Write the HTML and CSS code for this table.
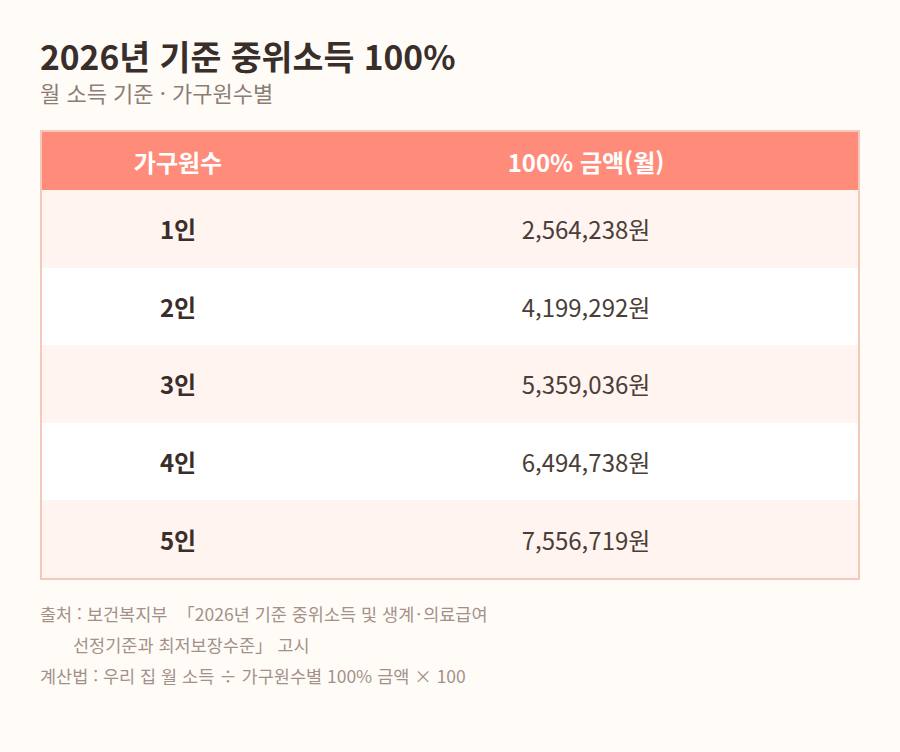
FILE: index.html
```html
<!DOCTYPE html>
<html lang="ko">
<head>
<meta charset="utf-8">
<title>2026년 기준 중위소득 100%</title>
<link rel="stylesheet" href="styles.css">
</head>
<body>
<main class="page">
  <header class="heading">
    <h1 class="title">2026년 기준 중위소득 100%</h1>
    <p class="subtitle">월 소득 기준 · 가구원수별</p>
  </header>
  <div class="table">
    <div class="row head">
      <div class="cell">가구원수</div>
      <div class="cell">100% 금액(월)</div>
    </div>
    <div class="row odd">
      <div class="cell size">1인</div>
      <div class="cell amount">2,564,238원</div>
    </div>
    <div class="row">
      <div class="cell size">2인</div>
      <div class="cell amount">4,199,292원</div>
    </div>
    <div class="row odd">
      <div class="cell size">3인</div>
      <div class="cell amount">5,359,036원</div>
    </div>
    <div class="row">
      <div class="cell size">4인</div>
      <div class="cell amount">6,494,738원</div>
    </div>
    <div class="row odd">
      <div class="cell size">5인</div>
      <div class="cell amount">7,556,719원</div>
    </div>
  </div>
  <footer class="notes">
    <p class="note hang">출처 : 보건복지부 <span class="open">「2026년 기준 중위소득 및 생계<span class="mid">·</span>의료급여<br>선정기준과 최저보장수준」 고시</span></p>
    <p class="note">계산법 : 우리 집 월 소득 ÷ 가구원수별 100% 금액 × 100</p>
  </footer>
</main>
</body>
</html>
```
FILE: styles.css
```css
html, body {
  margin: 0;
  padding: 0;
  background: #fffcf8;
}
body {
  font-family: "Noto Sans CJK KR", "Noto Sans", sans-serif;
  color: #3a2e2a;
}
.page {
  padding: 34px 40px 0 40px;
}
.heading {
  margin-bottom: 24px;
}
.title {
  margin: 0;
  font-size: 33.6px;
  font-weight: 700;
  line-height: 44px;
  color: #3a2e2a;
}
.subtitle {
  margin: 0;
  font-size: 22px;
  line-height: 28px;
  color: #8c7d75;
}
.table {
  border: 2px solid #f4c9bb;
  display: flex;
  flex-direction: column;
}
.row {
  display: grid;
  grid-template-columns: 1fr 2fr;
  height: 77.6px;
  align-items: center;
  background: #ffffff;
}
.row.odd {
  background: #fff4f0;
}
.row.head {
  height: 58px;
  background: #ff8c7a;
  color: #ffffff;
  font-weight: 700;
  font-size: 24px;
}
.cell {
  text-align: center;
}
.size {
  font-size: 24px;
  font-weight: 700;
  color: #3a2e2a;
}
.amount {
  font-size: 24px;
  color: #4a3e38;
}
.notes {
  margin-top: 18px;
}
.note {
  margin: 0;
  font-size: 17.5px;
  line-height: 31px;
  color: #a39189;
}
.hang {
  padding-left: 33px;
  text-indent: -33px;
}
.open {
  margin-left: 5px;
}
.mid {
  margin: 0 2px;
}
```
